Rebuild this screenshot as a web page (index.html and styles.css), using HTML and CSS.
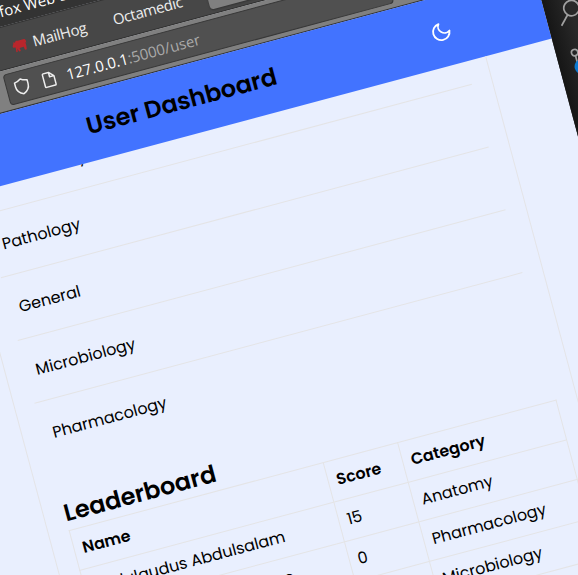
FILE: index.html
```html
<!DOCTYPE html>
<html lang="en"><head><meta charset="utf-8"><title>User Dashboard</title><link rel="stylesheet" href="styles.css"></head>
<body>
<div class="stage">
<div class="window">
  <div class="titlebar"><span>Firefox Web Browser</span></div>
  <div class="bookmarks">
    <svg class="pig" viewBox="0 0 16 14"><path d="M0 6 1.5 4 2 2 3.5 3 5 1 7 1.5H13Q15 1.5 15.5 3.5V6L14.5 5V9L14 13H12L11.5 9.5H7L7.5 13H5.5L4.5 9.5 4 13H2.5L3 8 0 7.5Z" fill="#b9262c"/></svg>
    <span class="mail">MailHog</span><span class="octa">Octamedic</span><span class="tab"></span>
  </div>
  <div class="toolbar"><div class="address">
    <svg class="shield" viewBox="0 0 16 18"><path d="M8 1.5Q11 3.6 14.5 4V8C14.5 12 12 15 8 16.7 4 15 1.5 12 1.5 8V4Q5 3.6 8 1.5Z"/></svg>
    <svg class="page" viewBox="0 0 14 17"><path d="M2.5 1.5H8L12.5 6V14.5Q12.5 15.5 11.5 15.5H2.5Q1.5 15.5 1.5 14.5V2.5Q1.5 1.5 2.5 1.5ZM8 1.5V6H12.5"/></svg>
    <span class="host">127.0.0.1</span><span class="path">:5000/user</span>
  </div></div>
  <header class="header"><h1>User Dashboard</h1>
    <svg class="moon" viewBox="0 0 24 24"><path d="M21 12.8A9 9 0 1 1 11.2 3 7 7 0 0 0 21 12.8Z"/></svg>
  </header>
  <main class="card">
    <ul class="list"><li><span>Biochemistry</span></li><li>Pathology</li><li>General</li><li>Microbiology</li><li>Pharmacology</li></ul>
    <h2>Leaderboard</h2>
    <table>
      <tr><th class="c1">Name</th><th class="c2">Score</th><th>Category</th></tr>
      <tr><td>Abdulaudus Abdulsalam</td><td>15</td><td>Anatomy</td></tr>
      <tr><td>Oluwaseun Adebayo Ese</td><td>0</td><td>Pharmacology</td></tr>
      <tr><td></td><td></td><td>Microbiology</td></tr>
    </table>
  </main>
</div>
<aside class="rail">
  <svg viewBox="0 0 77 100"><circle cx="26.9" cy="15.7" r="7.7"/><path d="M21.5 21.2 12.8 30.2"/><circle cx="18.5" cy="59.5" r="3.2"/><path d="M18.5 62.8V76"/><circle class="badge" cx="22" cy="75" r="7.5"/></svg>
</aside>
</div>
</body></html>
```
FILE: styles.css
```css
*{box-sizing:border-box}
html{overflow:hidden}
body{margin:0;width:578px;height:575px;overflow:hidden;background:#282828;font:16px/24px Poppins,Inter,sans-serif;color:#000}
.stage{display:flex;width:760px;height:760px;margin-left:-160px;transform:rotate(-15deg);transform-origin:160px 0}
.window{width:683.3px;height:760px;flex:none;overflow:hidden;background:#e9effe}
.rail{flex:1;background:linear-gradient(90deg,#161616,#292929 26px);padding-top:140px}
.rail svg{display:block;width:77px;height:100px;fill:none;stroke:#a0a0a0;stroke-width:1.7}
.rail .badge{fill:#0a78d1;stroke:none}
.titlebar{height:26px;background:#333;color:#fff;font:500 15px/22px "Open Sans",sans-serif;padding-left:130px}
.bookmarks{height:43px;background:#474747;border-top:1px solid #333;border-bottom:1px solid #303030;color:#eee;display:flex;align-items:center;padding-left:160px;font:500 15px/20px "Open Sans",sans-serif}
.pig{width:15px;height:14px;position:relative;top:1px}
.mail{margin-left:6px;width:83px;letter-spacing:-.35px}
.octa{width:97px;letter-spacing:-.4px}
.tab{width:300px;height:37px;background:#808080;align-self:flex-start;border-radius:0 0 4px 4px;box-shadow:0 1px 2px #333}
.toolbar{height:41px;background:#808080;border-bottom:1px solid #333;padding:4px 0 0 143px}
.address{width:397px;height:32px;background:#505050;border:1px solid #383838;border-radius:4px;display:flex;align-items:center;font:500 15px/20px "Open Sans",sans-serif;color:#fff;padding-left:7px}
.shield,.page{fill:none;stroke:#eee;stroke-width:1.5;stroke-linejoin:round}
.shield{width:16px;height:18px}
.page{width:14px;height:17px;margin:0 11px 0 13px}
.path{color:#aaa}
.header{height:70px;background:#4273ff;display:flex;align-items:center;padding-left:211px}
h1{margin:0;font-size:24px;line-height:36px;font-weight:600;width:356px}
.moon{width:22px;height:22px;fill:none;stroke:#fff;stroke-width:2;stroke-linejoin:round}
.card{margin-left:68px;width:547px;height:600px;border:1px solid #e4e4e7;border-top:0;padding:0 20px}
.list{list-style:none;margin:0;padding:0}
.list li{height:65px;border-bottom:1px solid #e4e4e6;padding:21px 10px}
.list li:first-child{height:24px;padding:0 10px;overflow:hidden}
.list li:first-child span{display:block;margin-top:-19px}
.list li:last-child{border:0}
h2{margin:31px 0 0;font-size:24px;line-height:35px;font-weight:600}
table{border-collapse:collapse;width:505px;table-layout:fixed}
td,th{border:1px solid #e4e4e6;height:41px;padding:0 8px;text-align:left;white-space:nowrap}
th{font-weight:600}
.c1{width:263px}.c2{width:77px}
```
